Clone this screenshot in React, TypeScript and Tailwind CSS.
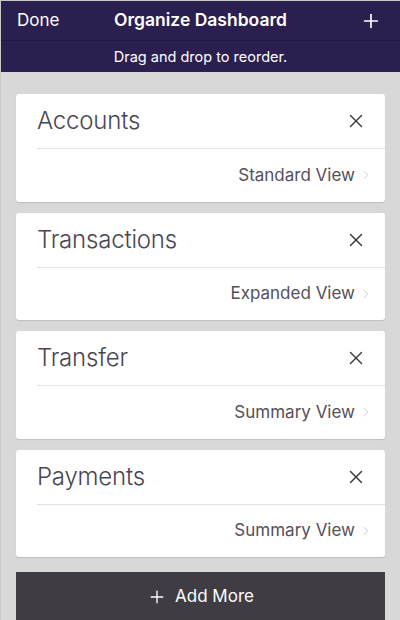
import { X, ChevronRight, Plus } from "lucide-react";

interface Widget {
  title: string;
  view: string;
}

const widgets: Widget[] = [
  { title: "Accounts", view: "Standard View" },
  { title: "Transactions", view: "Expanded View" },
  { title: "Transfer", view: "Summary View" },
  { title: "Payments", view: "Summary View" },
];

const WidgetCard = ({ w }: { w: Widget }) => (
  <div className="bg-white rounded-[3px] h-[107.5px] flex flex-col shadow-[0_1px_1px_rgba(0,0,0,0.12)]">
    <div className="h-[54px] flex items-center pl-[21px] pr-[18px] ">
      <p className="text-[24px] font-light text-[#4a4552] tracking-[-0.2px]">{w.title}</p>
      <X className="ml-auto w-[22px] h-[22px] text-[#3f3b45]" strokeWidth={1.6} />
    </div>
    <div className="ml-[21px] h-px bg-[#e3e3e6]" />
    <div className="flex-1 flex items-center justify-end pr-[12px]">
      <p className="text-[17px] text-[#55505a] mr-[4px]">{w.view}</p>
      <ChevronRight className="w-[14px] h-[14px] text-[#c8c7cc]" strokeWidth={1.6} />
    </div>
  </div>
);

export default function App() {
  return (
    <div
      className="w-[400px] h-[620px] bg-[#d8d8d8] border-l border-t border-[#c9c9c9] flex flex-col overflow-hidden"
      style={{ fontFamily: "Inter, 'Noto Sans', sans-serif" }}
    >
      <div className="bg-[#2b1f4f] text-white">
        <div className="h-[40px] flex items-center px-[16px] border-b border-[#231843]">
          <p className="text-[17px] w-[80px]">Done</p>
          <p className="flex-1 text-center text-[17.5px] font-semibold">Organize Dashboard</p>
          <div className="w-[80px] flex justify-end pr-[2px]">
            <Plus className="w-[22px] h-[22px]" strokeWidth={1.8} />
          </div>
        </div>
        <div className="h-[31px] flex items-center justify-center">
          <p className="text-[14.5px]">Drag and drop to reorder.</p>
        </div>
      </div>
      <div className="flex-1 flex flex-col gap-[11px] px-[15px] pt-[22px]">
        {widgets.map((w, i) => (
          <WidgetCard key={i} w={w} />
        ))}
        <div className="mt-[4px] bg-[#403c43] h-[50px] flex items-center justify-center text-white">
          <Plus className="w-[20px] h-[20px] mr-[8px]" strokeWidth={1.6} />
          <p className="text-[17px]">Add More</p>
        </div>
      </div>
    </div>
  );
}
